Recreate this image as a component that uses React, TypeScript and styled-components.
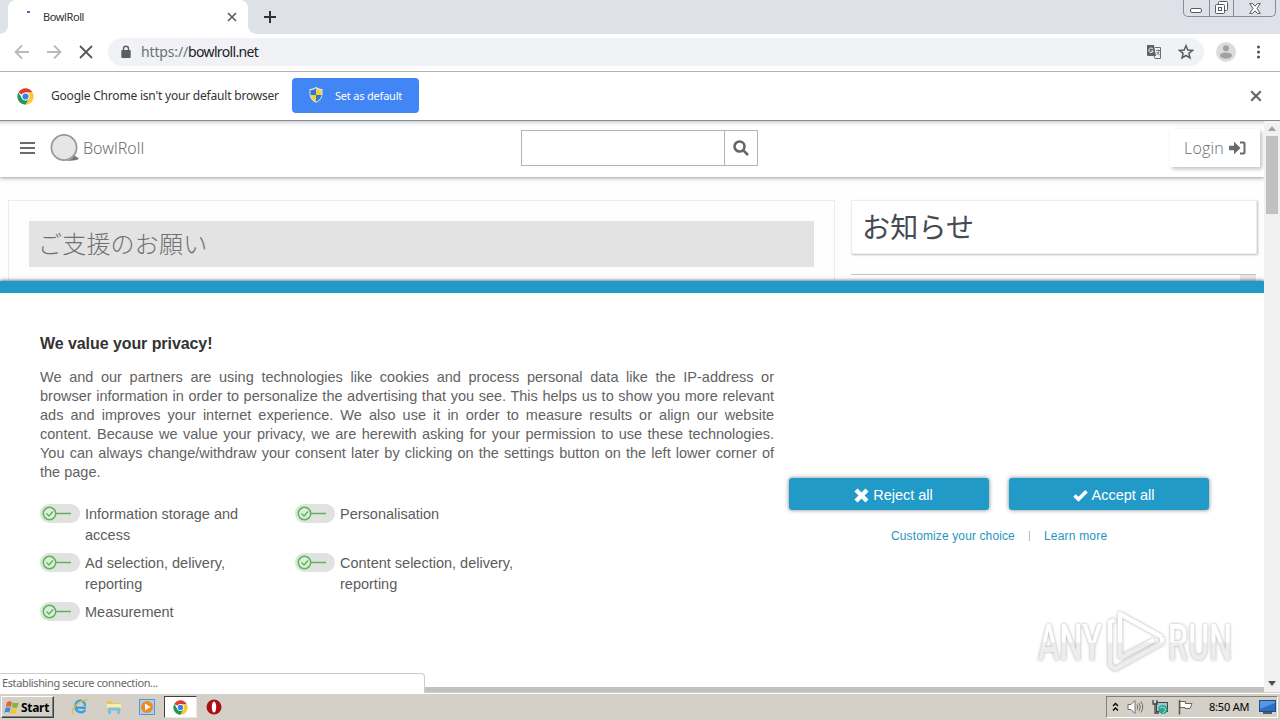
import React from 'react';
import styled, { createGlobalStyle } from 'styled-components';

const Global = createGlobalStyle`
  * { box-sizing: border-box; }
  html, body { margin: 0; padding: 0; }
  body { width: 1280px; height: 720px; overflow: hidden; background: #fff; }
  svg { display: block; flex: none; }
`;

const ui = `'Noto Sans', 'Open Sans', sans-serif`;
const arial = `'Liberation Sans', Arial, sans-serif`;
const jp = `'Noto Sans CJK JP', sans-serif`;

const Screen = styled.div`
  width: 1280px; height: 720px; display: flex; flex-direction: column; overflow: hidden;
  font-family: ${ui};
`;

const Label = styled.span<{ $size: number; $color?: string; $track?: number; $family?: string; $weight?: number }>`
  font-family: ${p => p.$family || ui};
  font-size: ${p => p.$size}px;
  color: ${p => p.$color || '#333'};
  letter-spacing: ${p => p.$track || 0}px;
  font-weight: ${p => p.$weight || 400};
  white-space: nowrap;
`;

/* ---------- browser chrome ---------- */
const TabStrip = styled.div`
  height: 34px; flex: none; display: flex; align-items: flex-start; background: #dee1e8; padding-left: 8px;
`;
const Tab = styled.div`
  position: relative; width: 240px; height: 34px; background: #fff; border-radius: 8px 8px 0 0;
  display: flex; align-items: center; padding: 0 11px 0 17px;
  &::before, &::after {
    content: ''; position: absolute; bottom: 0; width: 8px; height: 8px;
  }
  &::before { left: -8px; background: radial-gradient(circle at 0 0, transparent 7.5px, #fff 8px); }
  &::after { right: -8px; background: radial-gradient(circle at 100% 0, transparent 7.5px, #fff 8px); }
`;
const Spinner = styled.span`
  width: 3px; height: 2px; background: #4a6fb5; margin: -11px 1px 0 2px;
`;
const TabTitle = styled.div` flex: 1; padding-left: 12px; line-height: 34px; display: flex; `;
const NewTab = styled.div` padding: 11px 0 0 16px; flex: 1; `;
const WindowButtons = styled.div`
  display: flex; width: 93px; height: 17px; margin-right: 4px; border: 1px solid #858c99; border-top: 0;
  border-radius: 0 0 5px 5px;
`;
const WinButton = styled.div<{ $w: number }>`
  width: ${p => p.$w}px; display: flex; justify-content: center; align-items: center;
  & + & { border-left: 1px solid #858c99; }
`;

const Toolbar = styled.div`
  height: 38px; flex: none; display: flex; align-items: center; background: #fff; border-bottom: 1px solid #b2b2b2;
  padding: 0 10px 1px 14px;
`;
const NavIcons = styled.div` display: flex; flex: none; gap: 16px; width: 94px; `;
const Omnibox = styled.div`
  flex: none; width: 1096px; height: 28px; border-radius: 14px; background: #f0f2f5; display: flex; align-items: center;
  padding: 0 10px 0 12px;
`;
const Url = styled.div` flex: 1; padding: 0 0 1px 9px; display: flex; `;
const OmniIcons = styled.div` display: flex; gap: 16px; align-items: center; `;
const RightTools = styled.div` display: flex; align-items: center; gap: 15px; padding-left: 12px; `;

const InfoBar = styled.div`
  height: 49px; flex: none; display: flex; align-items: center; background: #fff; padding: 0 18px 0 17px;
  border-bottom: 1px solid #8c8c8c;
`;
const InfoText = styled.div` width: 241px; margin-left: 17px; padding-bottom: 2px; display: flex; `;
const DefaultButton = styled.div`
  width: 127px; height: 35px; margin-top: -1px; border-radius: 4px; background: #4285f4; display: flex; align-items: center;
  padding: 0 0 1px 17px; gap: 12px;
`;
const Spacer = styled.div` flex: 1; `;

/* ---------- page ---------- */
const Viewport = styled.div` height: 571px; flex: none; display: flex; background: #fff; `;
const Page = styled.div` width: 1264px; height: 571px; display: flex; flex-direction: column; overflow: hidden; `;
const SiteHeader = styled.header`
  height: 56px; flex: none; display: flex; align-items: center; padding: 0 4px 2px 20px;
  background: linear-gradient(#d2d2d2, #f4f4f4 3px, #fff 6px);
  box-shadow: 0 1px 4px rgba(0,0,0,.4); z-index: 1;
`;
const Brand = styled.div` display: flex; align-items: center; width: 501px; `;
const LogoBox = styled.div` margin: 0 3px 0 15px; `;
const SearchBox = styled.div`
  display: flex; width: 237px; height: 36px; border: 1px solid #b4b4b4;
`;
const SearchInput = styled.div` width: 203px; border-right: 1px solid #b4b4b4; `;
const SearchButton = styled.div` flex: 1; display: flex; align-items: center; justify-content: center; `;
const Login = styled.div`
  width: 90px; height: 38px; margin-top: -1px; background: #fff; box-shadow: 2px 2px 4px rgba(0,0,0,.25);
  display: flex; align-items: center; justify-content: space-between; padding: 0 14px 0 14px;
`;
const Content = styled.main`
  height: 104px; flex: none; display: flex; padding: 23px 7px 0 8px; gap: 16px; overflow: hidden; background: #fefefe;
`;
const Article = styled.section` width: 827px; height: 120px; border: 1px solid #ececec; padding: 20px; `;
const ArticleTitle = styled.h2`
  margin: 0; height: 46px; background: #e3e3e3; padding-left: 9px; line-height: 43px; font-weight: 300; display: flex;
`;
const Aside = styled.aside` width: 406px; `;
const NewsTitle = styled.h2`
  margin: 0; height: 54px; border: 1px solid #ebebeb; background: #fff; box-shadow: 1px 1px 2px rgba(0,0,0,.25);
  padding-left: 10px; line-height: 51px; font-weight: 400; display: flex;
`;
const NewsList = styled.div`
  display: flex; justify-content: flex-end; margin: 20px 1px 0 0; height: 20px; border-top: 1px solid #c3c3c3;
`;
const NewsScroll = styled.div` width: 16px; background: #e6e6e6; `;

const Consent = styled.div`
  height: 411px; flex: none; border-top: 12px solid #229ac8; background: #fff; box-shadow: 0 -1px 3px rgba(0,0,0,.5);
  display: flex; padding: 0 0 0 40px; z-index: 2;
`;
const ConsentText = styled.div` width: 734px; padding-top: 41px; `;
const ConsentTitle = styled.h3` margin: 0 0 14px; line-height: 20px; display: flex; `;
const Line = styled.span<{ $last?: boolean }>`
  display: block; height: 19px; line-height: 19px; white-space: nowrap; font-family: ${arial}; font-size: 14.5px; color: #626262;
  text-align: left; text-align-last: ${p => (p.$last ? 'left' : 'justify')};
`;
const Purposes = styled.div`
  display: grid; grid-template-columns: 255px 255px; row-gap: 7px; padding-top: 22px;
`;
const Purpose = styled.div` display: flex; gap: 5px; `;
const PurposeText = styled.div` font-family: ${arial}; font-size: 14.5px; line-height: 21px; color: #5c5c5c; white-space: pre; `;
const Actions = styled.div` width: 420px; margin-left: 15px; padding-top: 185px; `;
const ActionRow = styled.div` display: flex; gap: 20px; `;
const ActionButton = styled.button`
  width: 200px; height: 32px; border: 0; border-radius: 3px; background: #229ac8; box-shadow: 0 0 4px rgba(0,0,0,.5);
  display: flex; align-items: center; justify-content: center; gap: 4px; padding: 2px 0 0 9px; margin: 0;
`;
const LinkRow = styled.div` display: flex; align-items: center; height: 20px; margin: 16px 0 0 102px; `;
const LinkDivider = styled.span` width: 1px; height: 10px; background: #bbb; margin: 0 14px; `;

const ScrollBar = styled.div`
  width: 16px; height: 571px; background: #f1f1f1; display: flex; flex-direction: column; align-items: center;
  padding: 5px 0 6px;
`;
const Thumb = styled.div` width: 12px; height: 78px; background: #c1c1c1; margin-top: 5px; `;

const StatusBubble = styled.div`
  position: absolute; left: 0; top: 673px; width: 425px; height: 20px; background: #fff; border: 1px solid #ccc;
  border-left: 0; border-bottom: 0; border-radius: 0 4px 0 0; padding: 0 0 2px 2px; display: flex; align-items: center; z-index: 5;
`;
const HScroll = styled.div`
  position: absolute; left: 424px; top: 687px; width: 840px; height: 5px; background: #c1c1c1; z-index: 4;
`;
const Watermark = styled.div` position: absolute; left: 1020px; top: 602px; z-index: 6; `;

/* ---------- taskbar ---------- */
const Taskbar = styled.div`
  height: 28px; flex: none; background: #d4d0c8; border-top: 1px solid #d4d0c8; box-shadow: inset 0 1px 0 #fff;
  display: flex; align-items: center; padding: 1px 2px 0 1px;
`;
const StartButton = styled.div`
  width: 53px; height: 22px; display: flex; align-items: center; gap: 1px; padding-left: 2px; background: #d4d0c8;
  border: 1px solid; border-color: #fff #404040 #404040 #fff; box-shadow: inset -1px -1px 0 #808080;
`;
const TaskIcons = styled.div` display: flex; align-items: center; margin-left: 9px; `;
const TaskIcon = styled.div<{ $active?: boolean }>`
  width: ${p => (p.$active ? 33 : 33.7)}px; height: 22px; display: flex; align-items: center; justify-content: center;
  background: ${p => (p.$active ? '#fff' : 'transparent')};
  border: ${p => (p.$active ? '1px solid' : '0')};
  border-color: #404040 #e8e8e8 #e8e8e8 #404040;
`;
const Tray = styled.div`
  width: 172px; height: 22px; border: 1px solid; border-color: #808080 #fff #fff #808080; display: flex; align-items: center;
  padding: 0 1px 0 5px;
`;
const TrayIcons = styled.div` display: flex; align-items: center; gap: 8px; width: 97px; `;
const Clock = styled.div` width: 50px; display: flex; padding-bottom: 1px; `;

/* ---------- icons ---------- */
const Cross = ({ size, color, w }: { size: number; color: string; w: number }) => (
  <svg width={size} height={size} viewBox="0 0 10 10"><path d="M1 1L9 9M9 1L1 9" stroke={color} strokeWidth={w} fill="none" /></svg>
);
const ArrowIcon = styled.svg<{ $flip?: boolean }>` transform: ${p => (p.$flip ? 'scaleX(-1)' : 'none')}; `;
const Arrow = ({ flip }: { flip?: boolean }) => (
  <ArrowIcon width="16" height="16" viewBox="0 0 16 16" $flip={flip}>
    <path d="M15 8H2M8 1.5L1.5 8L8 14.5" stroke="#b9babd" strokeWidth="1.8" fill="none" />
  </ArrowIcon>
);
const ChromeLogo = ({ size }: { size: number }) => (
  <svg width={size} height={size} viewBox="0 0 48 48">
    <circle cx="24" cy="24" r="23" fill="#fff" />
    <path d="M24 24L4.1 12.5A23 23 0 0 1 43.9 12.5L24 13Z" fill="#df3b2f" />
    <path d="M24 13H44.2A23 23 0 0 1 24 47L33.5 29.5Z" fill="#fcc934" />
    <path d="M4.1 12.5A23 23 0 0 0 24 47L33.5 29.5L24 35L14.5 29.5Z" fill="#1e9a52" />
    <circle cx="24" cy="24" r="11" fill="#fff" />
    <circle cx="24" cy="24" r="8.7" fill="#3f80e8" />
  </svg>
);
const Toggle = () => (
  <svg width="40" height="19" viewBox="0 0 40 19">
    <defs><linearGradient id="tg"><stop offset="0" stopColor="#d3ead0" /><stop offset=".5" stopColor="#e0e3df" /><stop offset="1" stopColor="#e1e1e1" /></linearGradient></defs>
    <rect width="40" height="19" rx="9.5" fill="url(#tg)" />
    <circle cx="9.5" cy="9.5" r="6.2" fill="#d9f0d6" stroke="#65ad62" strokeWidth="1.5" />
    <path d="M6.5 9.5L9 12L13 7.5" fill="none" stroke="#65ad62" strokeWidth="1.4" />
    <path d="M16 9.5H31" stroke="#65ad62" strokeWidth="1.5" />
  </svg>
);
const WatermarkArt = styled.svg` overflow: visible; filter: drop-shadow(0 0 1.5px rgba(0,0,0,.33)); `;
const AnyRun = () => (
  <WatermarkArt width="240" height="80" viewBox="-10 0 240 80">
    <defs>
      <linearGradient id="wm" x1="0" x2="0" y1="0" y2="80" gradientUnits="userSpaceOnUse">
        <stop offset=".5" stopColor="#fff" /><stop offset=".51" stopColor="#ededed" />
      </linearGradient>
    </defs>
    <g fill="url(#wm)" fontFamily="Roboto, sans-serif" fontSize="50" fontWeight="500">
      <text x="8" y="58" textLength="64" lengthAdjust="spacingAndGlyphs">ANY</text>
      <text x="138" y="58" textLength="64" lengthAdjust="spacingAndGlyphs">RUN</text>
    </g>
    <g fill="none" stroke="url(#wm)" strokeWidth="4.5" strokeLinejoin="round">
      <path d="M90 56V12L132 35" />
      <path d="M85 18L80 20V63L85 67L132 41V35" />
      <path d="M90 56L124 38" />
    </g>
  </WatermarkArt>
);

const lines = [
  'We and our partners are using technologies like cookies and process personal data like the IP-address or',
  'browser information in order to personalize the advertising that you see. This helps us to show you more relevant',
  'ads and improves your internet experience. We also use it in order to measure results or align our website',
  'content. Because we value your privacy, we are herewith asking for your permission to use these technologies.',
  'You can always change/withdraw your consent later by clicking on the settings button on the left lower corner of',
  'the page.',
];
const purposes = [
  'Information storage and\naccess', 'Personalisation', 'Ad selection, delivery,\nreporting',
  'Content selection, delivery,\nreporting', 'Measurement',
];

export default function App() {
  return (
    <Screen>
      <Global />
      <TabStrip>
        <Tab>
          <Spinner />
          <TabTitle><Label $size={11} $track={-0.4}>BowlRoll</Label></TabTitle>
          <Cross size={10} color="#5a5d61" w={1.7} />
        </Tab>
        <NewTab>
          <svg width="12" height="12" viewBox="0 0 12 12"><path d="M6 0V12M0 6H12" stroke="#2f3237" strokeWidth="2" /></svg>
        </NewTab>
        <WindowButtons>
          <WinButton $w={25}>
            <svg width="12" height="12" viewBox="0 0 12 12"><rect x=".5" y="6.5" width="11" height="4" rx="1.5" fill="#fff" stroke="#555b66" /></svg>
          </WinButton>
          <WinButton $w={25}>
            <svg width="13" height="14" viewBox="0 0 13 14" fill="#fff" stroke="#555b66"><rect x="3.5" y=".5" width="9" height="9" rx="1" /><rect x=".5" y="3.5" width="9" height="9" rx="1" /><rect x="3.5" y="6.5" width="3" height="3" /></svg>
          </WinButton>
          <WinButton $w={42}>
            <svg width="12" height="11" viewBox="0 0 12 11"><path d="M.7.6H3.7L6 3.2L8.3.6H11.3L8 5.5L11.3 10.4H8.3L6 7.8L3.7 10.4H.7L4 5.5Z" fill="#fff" stroke="#555b66" /></svg>
          </WinButton>
        </WindowButtons>
      </TabStrip>

      <Toolbar>
        <NavIcons>
          <Arrow /><Arrow flip />
          <svg width="16" height="16" viewBox="0 0 16 16"><path d="M2 2L14 14M14 2L2 14" stroke="#55585c" strokeWidth="1.8" /></svg>
        </NavIcons>
        <Omnibox>
          <svg width="12" height="14" viewBox="0 0 12 14"><rect x="1.3" y="5" width="9.4" height="8" rx="1" fill="#5a5d61" /><path d="M3.5 5.5V3.8A2.5 2.5 0 0 1 8.5 3.8V5.5" fill="none" stroke="#5a5d61" strokeWidth="1.4" /></svg>
          <Url>
            <Label $size={14} $color="#6c7075" $track={-0.15}>https://</Label>
            <Label $size={14} $color="#202124" $track={-0.65}>bowlroll.net</Label>
          </Url>
          <OmniIcons>
            <svg width="16" height="16" viewBox="0 0 16 16">
              <path d="M1 1H8L10 12H2Q1 12 1 11Z" fill="#5f6368" />
              <path d="M9 3.5H14.5V14.5H9L8 12" fill="none" stroke="#6b6e73" />
              <path d="M7 5.2A2.2 2.2 0 1 0 7.2 7H5.2" stroke="#fff" fill="none" />
              <path d="M10 6.5H14M12 5.5V6.5M13.4 6.5Q12.5 9.5 10.5 10.8M10.8 8Q12 10 13.8 11" stroke="#6b6e73" strokeWidth=".9" fill="none" />
            </svg>
            <svg width="16" height="16" viewBox="0 0 16 16"><path d="M8 1.7L9.8 6L14.5 6.4L10.9 9.4L12 14L8 11.5L4 14L5.1 9.4L1.5 6.4L6.2 6Z" fill="none" stroke="#5a5d61" strokeWidth="1.5" /></svg>
          </OmniIcons>
        </Omnibox>
        <RightTools>
          <svg width="20" height="20" viewBox="0 0 20 20"><circle cx="10" cy="10" r="10" fill="#dcdcdc" /><circle cx="10" cy="6.2" r="3" fill="#a2a2a2" /><ellipse cx="10" cy="13.6" rx="6" ry="3.2" fill="#a2a2a2" /></svg>
          <svg width="16" height="16" viewBox="0 0 16 16" fill="#4c4f53"><circle cx="7.5" cy="3" r="1.5" /><circle cx="7.5" cy="8" r="1.5" /><circle cx="7.5" cy="13" r="1.5" /></svg>
        </RightTools>
      </Toolbar>

      <InfoBar>
        <ChromeLogo size={17} />
        <InfoText><Label $size={12} $track={-0.2}>Google Chrome isn't your default browser</Label></InfoText>
        <DefaultButton>
          <svg width="14" height="16" viewBox="0 0 14 16">
            <path d="M7 0Q10 2 13.5 2.2V7Q13 13 7 15.8Q1 13 .5 7V2.2Q4 2 7 0Z" fill="#e7eaf0" />
            <path d="M7 1.2V8H1.4V3.2Q4.5 3 7 1.2Z" fill="#2f78cf" /><path d="M7 1.2V8H12.6V3.2Q9.5 3 7 1.2Z" fill="#f6d033" />
            <path d="M7 8V14.7Q2 12.3 1.4 8Z" fill="#f6d033" /><path d="M7 8V14.7Q12 12.3 12.6 8Z" fill="#2f78cf" />
          </svg>
          <Label $size={11} $color="#fff" $track={-0.2}>Set as default</Label>
        </DefaultButton>
        <Spacer />
        <Cross size={12} color="#606367" w={1.7} />
      </InfoBar>

      <Viewport>
        <Page>
          <SiteHeader>
            <Brand>
              <svg width="15" height="14" viewBox="0 0 15 14"><path d="M0 2H15M0 7H15M0 12H15" stroke="#6c6c6c" strokeWidth="2" /></svg>
              <LogoBox>
                <svg width="30" height="30" viewBox="0 0 30 30">
                  <path d="M13 27.8Q21 28 24.5 22.5L29 25.5Q28 28 13 27.8Z" fill="#777" />
                  <circle cx="14" cy="14.5" r="12.6" fill="#e6e6e6" stroke="#999" strokeWidth="1.8" />
                </svg>
              </LogoBox>
              <Label $size={16} $color="#6c6c6c" $weight={300}>BowlRoll</Label>
            </Brand>
            <SearchBox>
              <SearchInput />
              <SearchButton>
                <svg width="16" height="16" viewBox="0 0 16 16"><circle cx="6.5" cy="6.5" r="5" fill="none" stroke="#666" strokeWidth="2.6" /><path d="M10.3 10.3L15 15" stroke="#666" strokeWidth="2.6" /></svg>
              </SearchButton>
            </SearchBox>
            <Spacer />
            <Login>
              <Label $size={16} $color="#6c6c6c" $weight={300} $track={0.2} $family="'Open Sans', sans-serif">Login</Label>
              <svg width="17" height="14" viewBox="0 0 17 14"><path d="M0 4.7H5V.8L11.5 7L5 13.2V9.3H0Z" fill="#6a6a6a" /><path d="M11 1.5H14.500Q15.500 1.500 15.500 2.500V11.500Q15.500 12.500 14.500 12.500H11" fill="none" stroke="#6a6a6a" strokeWidth="2" /></svg>
            </Login>
          </SiteHeader>

          <Content>
            <Article>
              <ArticleTitle><Label $size={24} $color="#707070" $weight={300} $track={0.2} $family={jp}>ご支援のお願い</Label></ArticleTitle>
            </Article>
            <Aside>
              <NewsTitle><Label $size={28} $color="#444b52" $track={0.2} $family={jp}>お知らせ</Label></NewsTitle>
              <NewsList><NewsScroll /></NewsList>
            </Aside>
          </Content>

          <Consent>
            <ConsentText>
              <ConsentTitle><Label $size={16} $weight={700} $color="#333" $track={-0.07} $family={arial}>We value your privacy!</Label></ConsentTitle>
              {lines.map((l, i) => <Line key={i} $last={i === lines.length - 1}>{l}</Line>)}
              <Purposes>
                {purposes.map(p => <Purpose key={p}><Toggle /><PurposeText>{p}</PurposeText></Purpose>)}
              </Purposes>
            </ConsentText>
            <Actions>
              <ActionRow>
                <ActionButton>
                  <svg width="15" height="15" viewBox="0 0 15 15"><path d="M2 2L13 13M13 2L2 13" stroke="#fff" strokeWidth="4.4" /></svg>
                  <Label $size={14.5} $color="#fff" $family={arial}>Reject all</Label>
                </ActionButton>
                <ActionButton>
                  <svg width="15" height="13" viewBox="0 0 15 13"><path d="M1.5 6.5L5.5 10.3L13.5 2.3" fill="none" stroke="#fff" strokeWidth="3.6" /></svg>
                  <Label $size={14.5} $color="#fff" $family={arial}>Accept all</Label>
                </ActionButton>
              </ActionRow>
              <LinkRow>
                <Label $size={12} $color="#2795bd" $family={arial} $track={0.12}>Customize your choice</Label>
                <LinkDivider />
                <Label $size={12} $color="#2795bd" $family={arial} $track={0.2}>Learn more</Label>
              </LinkRow>
            </Actions>
          </Consent>
        </Page>
        <ScrollBar>
          <svg width="8" height="5" viewBox="0 0 8 5"><path d="M0 5L4 0L8 5Z" fill="#a3a3a3" /></svg>
          <Thumb />
          <Spacer />
          <svg width="8" height="5" viewBox="0 0 8 5"><path d="M0 0L4 5L8 0Z" fill="#505050" /></svg>
        </ScrollBar>
      </Viewport>

      <Taskbar>
        <StartButton>
          <svg width="16" height="15" viewBox="0 0 16 15">
            <path d="M3 2Q5.500 .5 8 2L6.800 7Q4.500 5.700 1.800 7Z" fill="#e8622b" /><path d="M8.800 2.400Q11.500 3.600 14.800 2.400L13.500 7.300Q10.500 8.500 7.600 7.300Z" fill="#7fb83c" />
            <path d="M1.600 7.800Q4 6.600 6.600 7.900L5.400 12.700Q3 11.400 .3 12.700Z" fill="#3e8edb" /><path d="M7.400 8.200Q10.200 9.400 13.300 8.200L12 13Q9 14.300 6.200 13Z" fill="#f7c331" />
          </svg>
          <Label $size={12} $color="#000" $weight={700} $track={-0.3}>Start</Label>
        </StartButton>
        <TaskIcons>
          <TaskIcon>
            <svg width="18" height="18" viewBox="0 0 18 18"><path d="M15 9.800H5A4.800 4.800 0 1 1 14 7.800M14.300 12A5.500 5.500 0 0 1 4.500 9.500" fill="none" stroke="#3aa0df" strokeWidth="2.500" /><path d="M2 16C-1 12 8 1.500 16.500 2" fill="none" stroke="#e3bd3c" strokeWidth="1.300" /></svg>
          </TaskIcon>
          <TaskIcon>
            <svg width="18" height="18" viewBox="0 0 18 18"><path d="M2 3H7L8.500 5H16V13H2Z" fill="#e9c65c" /><path d="M2 6H16V10H2Z" fill="#f9eba9" /><path d="M3 16V10.500Q3 9.500 4 9.500H14Q15 9.500 15 10.500V16H12V12.500H6V16Z" fill="#7cc0e6" /></svg>
          </TaskIcon>
          <TaskIcon>
            <svg width="18" height="18" viewBox="0 0 18 18"><rect x="1.500" y="1.500" width="15" height="15" fill="#a9d0f3" stroke="#5795d3" /><circle cx="9" cy="9" r="6" fill="#f08a1d" /><path d="M7 5.500L12.500 9L7 12.500Z" fill="#fff" /></svg>
          </TaskIcon>
          <TaskIcon $active><ChromeLogo size={15} /></TaskIcon>
          <TaskIcon>
            <svg width="16" height="16" viewBox="0 0 16 16"><circle cx="8" cy="8" r="7.500" fill="#a81015" /><ellipse cx="8" cy="8" rx="2.200" ry="5.500" fill="#fff" /></svg>
          </TaskIcon>
        </TaskIcons>
        <Spacer />
        <Tray>
          <TrayIcons>
            <svg width="7" height="10" viewBox="0 0 7 10"><path d="M1 4L3.500 1.500L6 4M1 8.500L3.500 6L6 8.500" stroke="#000" strokeWidth="1.300" fill="none" /></svg>
            <svg width="17" height="16" viewBox="0 0 17 16" fill="none" stroke="#707070"><path d="M1 5.500H4L8 1.500V14.500L4 10.500H1Z" fill="#fff" /><path d="M10 5.500Q11.500 8 10 10.500M12 4Q14.500 8 12 12M14 2.500Q17.500 8 14 13.500" /></svg>
            <svg width="17" height="16" viewBox="0 0 17 16"><rect x="4.500" y="3.500" width="11" height="9" fill="#9cc5cd" stroke="#444" /><path d="M1 1V5H5V1M3 5V14H7" fill="none" stroke="#444" strokeWidth="1.300" /><circle cx="11" cy="10.500" r="4.500" fill="#27a58e" /><path d="M8 9Q11 7 13 9T11 14" fill="none" stroke="#a0dfd8" /></svg>
            <svg width="17" height="16" viewBox="0 0 17 16"><path d="M2.500 1V15.500" stroke="#555" strokeWidth="1.500" /><path d="M3 2.500H8.500V4.500H15L13 9.500H8V8.500H3Z" fill="#fff" stroke="#666" /></svg>
          </TrayIcons>
          <Clock><Label $size={11} $color="#000" $track={-0.2}>8:50 AM</Label></Clock>
          <svg width="17" height="14" viewBox="0 0 17 14"><rect x=".5" y=".5" width="16" height="11" fill="#2d6fc4" stroke="#244a86" /><path d="M1 9L16 3V1H1Z" fill="#5697df" /><path d="M4 13H13" stroke="#333" strokeWidth="1.500" /></svg>
        </Tray>
      </Taskbar>

      <HScroll />
      <StatusBubble><Label $size={11} $color="#666" $track={-0.38}>Establishing secure connection...</Label></StatusBubble>
      <Watermark><AnyRun /></Watermark>
    </Screen>
  );
}
